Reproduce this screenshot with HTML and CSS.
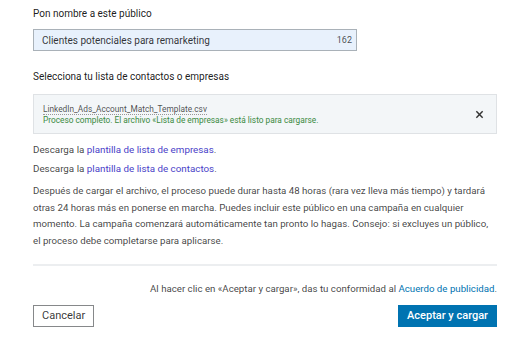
FILE: index.html
```html
<!DOCTYPE html>
<html lang="es">
<head>
    <meta charset="UTF-8">
    <meta name="viewport" content="width=device-width, initial-scale=1.0">
    <title>Subir lista de contactos</title>
    <link rel="stylesheet" href="styles.css">
</head>
<body>
    <div class="dialog">
        <label class="field-label" for="audience-name">Pon nombre a este público</label>
        <div class="name-input">
            <input id="audience-name" type="text" value="Clientes potenciales para remarketing">
            <span class="counter">162</span>
        </div>

        <div class="field-label list-label">Selecciona tu lista de contactos o empresas</div>
        <div class="file-box">
            <div class="file-info">
                <div class="file-name">LinkedIn_Ads_Account_Match_Template.csv</div>
                <div class="file-status">Proceso completo. El archivo «Lista de empresas» está listo para cargarse.</div>
            </div>
            <button class="file-remove" aria-label="Eliminar archivo">
                <svg width="9" height="9" viewBox="0 0 10 10">
                    <path d="M1.5 1.5 L8.5 8.5 M8.5 1.5 L1.5 8.5" stroke="#333" stroke-width="1.6" fill="none"/>
                </svg>
            </button>
        </div>

        <p class="download first">Descarga la <a href="#">plantilla de lista de empresas</a>.</p>
        <p class="download">Descarga la <a href="#">plantilla de lista de contactos</a>.</p>

        <p class="info">Después de cargar el archivo, el proceso puede durar hasta 48 horas (rara vez lleva más tiempo) y tardará otras 24 horas más en ponerse en marcha. Puedes incluir este público en una campaña en cualquier momento. La campaña comenzará automáticamente tan pronto lo hagas. Consejo: si excluyes un público, el proceso debe completarse para aplicarse.</p>

        <div class="footer">
            <p class="agreement">Al hacer clic en «Aceptar y cargar», das tu conformidad al <a href="#">Acuerdo de publicidad</a>.</p>
            <div class="actions">
                <button class="btn btn-secondary">Cancelar</button>
                <button class="btn btn-primary">Aceptar y cargar</button>
            </div>
        </div>
    </div>
</body>
</html>
```

FILE: styles.css
```css
body {
    margin: 0;
    font-family: Roboto, 'Noto Sans', sans-serif;
    color: rgba(0, 0, 0, 0.75);
    background: #fff;
}
.dialog {
    padding: 6px 15px 0 33px;
}
.field-label {
    display: block;
    font-size: 10px;
    line-height: 16px;
    color: rgba(0, 0, 0, 0.9);
}
.name-input {
    display: flex;
    align-items: center;
    width: 324px;
    height: 22px;
    box-sizing: border-box;
    margin-top: 7px;
    padding: 0 4px 0 8px;
    background: #e8f1fc;
    border: 1px solid #a9b1b8;
}
.name-input input {
    flex: 1;
    min-width: 0;
    border: none;
    background: transparent;
    padding: 0;
    font-family: inherit;
    font-size: 10px;
    color: rgba(0, 0, 0, 0.8);
    outline: none;
}
.counter {
    font-size: 9px;
    color: rgba(0, 0, 0, 0.7);
}
.list-label {
    margin-top: 18px;
}
.file-box {
    display: flex;
    align-items: center;
    height: 40px;
    box-sizing: border-box;
    margin-top: 9px;
    padding: 1px 12px 0 9px;
    background: #f3f6f8;
    border: 1px solid #dfe2e5;
}
.file-info {
    flex: 1;
    font-size: 8.3px;
    line-height: 11px;
}
.file-name {
    display: inline-block;
    color: rgba(0, 0, 0, 0.7);
    border-bottom: 1px dotted #999;
    line-height: 10px;
}
.file-status {
    color: #3a8a3f;
}
.file-remove {
    display: flex;
    border: none;
    background: none;
    padding: 0;
    cursor: pointer;
}
.download {
    margin: 0;
    font-size: 9.8px;
    line-height: 19px;
}
.download.first {
    margin-top: 6px;
}
a {
    text-decoration: none;
}
.download a {
    color: #4a3fc8;
}
.info {
    margin: 5px 0 0;
    font-size: 9.7px;
    line-height: 16.7px;
}
.footer {
    margin-top: 14px;
    border-top: 2px solid #eceef0;
}
.agreement {
    margin: 15px 0 0;
    text-align: right;
    font-size: 9.7px;
    line-height: 16px;
}
.agreement a {
    color: #0073b1;
}
.actions {
    display: flex;
    justify-content: space-between;
    margin-top: 8px;
}
.btn {
    height: 22px;
    padding: 0 8px;
    font-family: inherit;
    font-size: 11px;
    cursor: pointer;
}
.btn-secondary {
    background: #fff;
    border: 1px solid #86888a;
    color: rgba(0, 0, 0, 0.8);
}
.btn-primary {
    background: #0073b1;
    border: none;
    color: #fff;
    font-weight: 500;
    padding: 0 9px;
}
```
